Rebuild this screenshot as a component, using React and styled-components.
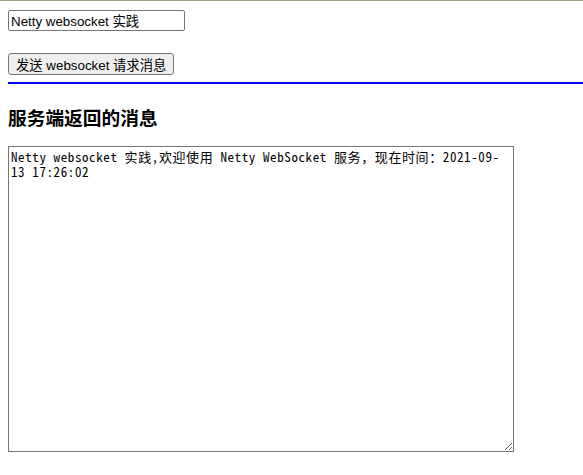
import React from "react";
import styled, { createGlobalStyle } from "styled-components";

const GlobalStyle = createGlobalStyle`
  html, body {
    margin: 0;
    padding: 0;
    background: #fff;
  }
  body {
    border-top: 1px solid #98a68c;
    font-family: "Liberation Sans", "Noto Sans CJK SC", sans-serif;
  }
`;

const Page = styled.form`
  display: flex;
  flex-direction: column;
  align-items: flex-start;
  padding: 9px 0 0 8px;
`;

const MessageInput = styled.input`
  box-sizing: border-box;
  width: 177px;
  height: 21px;
  margin: 0;
  padding: 1px 2px;
  border: 1px solid #767676;
  border-radius: 2px;
  font-family: "Liberation Sans", "Noto Sans CJK SC", sans-serif;
  font-size: 13.33px;
  color: #000;
  background: #fff;
`;

const SendButton = styled.button`
  box-sizing: border-box;
  height: 22px;
  margin: 22px 0 0;
  padding: 1px 7px;
  border: 1px solid #767676;
  border-radius: 3px;
  background: #efefef;
  font-family: "Liberation Sans", "Noto Sans CJK SC", sans-serif;
  font-size: 13.33px;
  color: #000;
`;

const Rule = styled.div`
  align-self: stretch;
  height: 2px;
  margin-top: 7px;
  background: #0000ff;
`;

const Title = styled.h3`
  margin: 20px 0 0;
  font-family: "Noto Sans CJK SC", sans-serif;
  font-size: 18.72px;
  font-weight: 700;
  line-height: 26px;
  color: #000;
`;

const Output = styled.textarea`
  box-sizing: border-box;
  width: 506px;
  height: 306px;
  margin: 16px 0 0;
  padding: 2px;
  border: 1px solid #767676;
  font-family: "Noto Sans Mono CJK SC", "Liberation Mono", monospace;
  font-size: 13px;
  letter-spacing: 0.6px;
  line-height: 15px;
  color: #000;
  background: #fff;
  resize: both;
`;

export default function App() {
  return (
    <>
      <GlobalStyle />
      <Page onSubmit={(e) => e.preventDefault()}>
        <MessageInput type="text" defaultValue="Netty websocket 实践" />
        <SendButton type="button">发送 websocket 请求消息</SendButton>
        <Rule />
        <Title>服务端返回的消息</Title>
        <Output
          readOnly
          defaultValue="Netty websocket 实践,欢迎使用 Netty WebSocket 服务，现在时间：2021-09-13 17:26:02"
        />
      </Page>
    </>
  );
}
